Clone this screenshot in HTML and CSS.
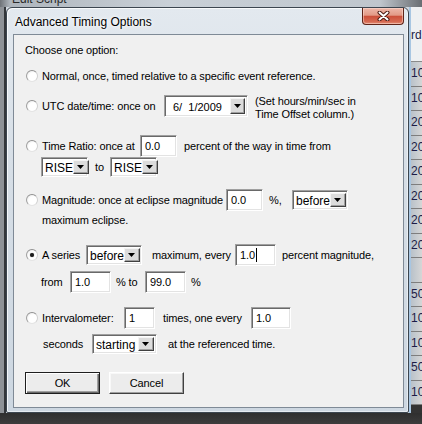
FILE: index.html
```html
<!DOCTYPE html>
<html>
<head>
<meta charset="utf-8">
<link rel="stylesheet" href="styles.css">
</head>
<body>
<div class="desktop">
  <div class="parent">
    <div class="parent-title"><span>Edit Script</span></div>
    <div class="parent-body">
      <div class="pleft"></div>
      <div class="pmid"></div>
      <div class="plist">
        <div class="phead">rd</div>
        <div class="prow">10</div>
        <div class="prow">10</div>
        <div class="prow">20</div>
        <div class="prow">20</div>
        <div class="prow">20</div>
        <div class="prow">20</div>
        <div class="prow">20</div>
        <div class="prow">20</div>
        <div class="prow"></div>
        <div class="prow">50</div>
        <div class="prow">10</div>
        <div class="prow">10</div>
        <div class="prow">50</div>
        <div class="prow">10</div>
      </div>
    </div>
    <div class="parent-bottom"></div>
  </div>

  <div class="dialog">
    <div class="titlebar">
      <span class="title">Advanced Timing Options</span>
      <div class="close">
        <svg width="13" height="10" viewBox="0 0 13 10"><path d="M2.5 1.5L10.5 8.5M10.5 1.5L2.5 8.5" stroke="#4a1a12" stroke-width="4" stroke-linecap="round"/><path d="M2.5 1.5L10.5 8.5M10.5 1.5L2.5 8.5" stroke="#ffffff" stroke-width="2" stroke-linecap="round"/></svg>
      </div>
    </div>
    <div class="client">
      <div class="line head">Choose one option:</div>

      <div class="line l1"><span class="radio"></span><span>Normal, once, timed relative to a specific event reference.</span></div>

      <div class="line l2">
        <span class="radio"></span><span class="lbl w-utc">UTC date/time: once on</span>
        <div class="select date"><span class="val date-val">6/&nbsp; 1/2009</span><span class="btn"><svg width="7" height="4" viewBox="0 0 7 4"><path d="M0 0H7L3.5 4Z" fill="#000"/></svg></span></div>
        <div class="note">(Set hours/min/sec in<br>Time Offset column.)</div>
      </div>

      <div class="line l3">
        <span class="radio"></span><span class="lbl w-ratio">Time Ratio: once at</span>
        <div class="field w37">0.0</div>
        <span class="ml7">percent of the way in time from</span>
      </div>

      <div class="line l3b">
        <div class="select w47 ml16"><span class="val">RISE</span><span class="btn"><svg width="7" height="4" viewBox="0 0 7 4"><path d="M0 0H7L3.5 4Z" fill="#000"/></svg></span></div>
        <span class="lbl ml7 w-to">to</span>
        <div class="select w47"><span class="val">RISE</span><span class="btn"><svg width="7" height="4" viewBox="0 0 7 4"><path d="M0 0H7L3.5 4Z" fill="#000"/></svg></span></div>
      </div>

      <div class="line l4">
        <span class="radio"></span><span class="lbl w-mag">Magnitude: once at eclipse magnitude</span>
        <div class="field w37">0.0</div>
        <span class="lbl ml6 w-pc">%,</span>
        <div class="select w56"><span class="val">before</span><span class="btn"><svg width="7" height="4" viewBox="0 0 7 4"><path d="M0 0H7L3.5 4Z" fill="#000"/></svg></span></div>
      </div>

      <div class="line l4b"><span class="ml17">maximum eclipse.</span></div>

      <div class="line l5">
        <span class="radio checked"></span><span class="lbl w-series">A series</span>
        <div class="select w56"><span class="val">before</span><span class="btn"><svg width="7" height="4" viewBox="0 0 7 4"><path d="M0 0H7L3.5 4Z" fill="#000"/></svg></span></div>
        <span class="lbl ml10 w-every">maximum, every</span>
        <div class="field w41">1.0<span class="caret"></span></div>
        <span class="ml6">percent magnitude,</span>
      </div>

      <div class="line l5b">
        <span class="lbl ml16 w-from">from</span>
        <div class="field w41">1.0</div>
        <span class="lbl ml5 w-pcto">% to</span>
        <div class="field w41">99.0</div>
        <span class="ml5">%</span>
      </div>

      <div class="line l6">
        <span class="radio"></span><span class="lbl w-intv">Intervalometer:</span>
        <div class="field w31">1</div>
        <span class="lbl ml8 w-times">times, one every</span>
        <div class="field w40">1.0</div>
      </div>

      <div class="line l6b">
        <span class="lbl ml18 w-sec">seconds</span>
        <div class="select w65"><span class="val">starting</span><span class="btn"><svg width="7" height="4" viewBox="0 0 7 4"><path d="M0 0H7L3.5 4Z" fill="#000"/></svg></span></div>
        <span class="ml11">at the referenced time.</span>
      </div>

      <div class="line buttons">
        <div class="button default">OK</div>
        <div class="button cancel">Cancel</div>
      </div>
    </div>
  </div>
</div>
</body>
</html>
```

FILE: styles.css
```css
* { box-sizing: border-box; }
html, body { margin: 0; padding: 0; }
body {
  width: 422px;
  height: 424px;
  overflow: hidden;
  font-family: "Liberation Sans", Arial, sans-serif;
  font-size: 11px;
  letter-spacing: -0.12px;
  color: #000;
  background: #333;
}
.desktop { position: relative; width: 422px; height: 424px; overflow: hidden; }

/* background parent window */
.parent { position: absolute; inset: 0; display: flex; flex-direction: column; }
.parent-title {
  height: 7px;
  position: relative;
  overflow: hidden;
  background: linear-gradient(90deg, #6f7378 0, #aeb5bc 10px, #c9d0d7 40%, #bfc6cd 90%, #6a6e73 100%);
}
.parent-title span {
  position: absolute;
  left: 12px;
  top: -8px;
  font-size: 12px;
  letter-spacing: 0;
  color: #2a2a2a;
}
.parent-body { flex: 1; display: flex; }
.pleft { width: 6px; background: linear-gradient(90deg, #8e9297 0 4px, #33363a 4px 6px); }
.pmid { flex: 1; background: #cfd6dd; }
.plist {
  width: 13px;
  display: flex;
  flex-direction: column;
  border-left: 2px solid #a8c6e2;
  overflow: hidden;
  color: #1c1c48;
  font-size: 12px;
  letter-spacing: 0;
}
.phead {
  height: 55px;
  flex: none;
  padding-top: 21px;
  line-height: 14px;
  background: #eef0f2;
  border-bottom: 1px solid #8a8a8a;
}
.prow {
  height: 24.5px;
  flex: none;
  line-height: 23px;
  background: linear-gradient(90deg, #b9c2ca, #d6d6d6);
  border-bottom: 1px solid #7e7e7e;
}
.parent-bottom {
  height: 11px;
  background: linear-gradient(#2f2f2f, #3c3c3c);
}

/* dialog window */
.dialog {
  position: absolute;
  left: 6px;
  top: 7px;
  width: 403px;
  height: 406px;
  border: 1px solid #3c4650;
  border-radius: 6px 6px 2px 2px;
  background: linear-gradient(180deg, #e3e9ef 0%, #d6dee6 40%, #cdd7e1 100%);
  box-shadow: inset 1px 1px 0 rgba(255,255,255,0.75), inset -1px -1px 0 rgba(255,255,255,0.5);
  padding: 0 4px 4px 6px;
  display: flex;
  flex-direction: column;
}
.titlebar {
  height: 26px;
  flex: none;
  display: flex;
  align-items: flex-start;
}
.title {
  padding: 7px 0 0 2px;
  line-height: 14px;
  font-size: 12px;
  letter-spacing: 0;
  color: #000;
  text-shadow: 0 0 6px #fff, 0 0 3px #fff;
}
.close {
  margin-left: auto;
  width: 42px;
  height: 17px;
  border: 1px solid #5e2418;
  border-top: none;
  border-radius: 0 0 4px 4px;
  background: linear-gradient(180deg, #eeb8aa 0%, #e29a86 45%, #cc503a 52%, #d66a52 85%, #e39078 100%);
  box-shadow: inset 0 0 0 1px rgba(255,225,215,0.5);
  display: flex;
  align-items: center;
  justify-content: center;
}
.close svg { display: block; }

.client {
  flex: 1;
  border: 1px solid #7f8a96;
  background: #f0f0f0;
  padding: 4px 0 0 11px;
  display: flex;
  flex-direction: column;
}

.line {
  display: flex;
  align-items: center;
  height: 22px;
  flex: none;
  white-space: nowrap;
}
.l1 { margin-top: 4px; }
.l2 { margin-top: 8px; }
.l3 { margin-top: 18px; }
.l3b { height: 20px; }
.l4 { margin-top: 12px; }
.l4b { height: 18px; }
.l5 { margin-top: 15px; }
.l5b { margin-top: 5px; }
.l6 { margin-top: 14px; }
.l6b { margin-top: 5px; height: 20px; }
.buttons { margin-top: 18px; }

.lbl { display: inline-block; flex: none; }
.w-utc { width: 122px; }
.w-ratio { width: 98px; }
.w-to { width: 15px; }
.w-mag { width: 184px; }
.w-pc { width: 23px; }
.w-series { width: 44px; }
.w-every { width: 83px; }
.w-from { width: 29px; }
.w-pcto { width: 29px; }
.w-intv { width: 82px; }
.w-times { width: 88px; }
.w-sec { width: 49px; }

.ml5 { margin-left: 5px; }
.ml6 { margin-left: 6px; }
.ml7 { margin-left: 7px; }
.ml8 { margin-left: 8px; }
.ml10 { margin-left: 10px; }
.ml11 { margin-left: 11px; }
.ml16 { margin-left: 16px; }
.ml17 { margin-left: 17px; }
.ml18 { margin-left: 18px; }

/* radio buttons */
.radio {
  flex: none;
  width: 12px;
  height: 12px;
  margin: 0 4px 0 1px;
  border-radius: 50%;
  border: 1px solid;
  border-color: #909090 #d0d0d0 #e4e4e4 #a0a0a0;
  background: radial-gradient(circle at 62% 62%, #ffffff 0 50%, #ececec 80%, #dadada 100%);
  position: relative;
}
.radio.checked::after {
  content: "";
  position: absolute;
  left: 3px;
  top: 3px;
  width: 4px;
  height: 4px;
  border-radius: 50%;
  background: #1b1b1b;
  box-shadow: 0 0 1px #555;
}

/* text fields */
.field {
  flex: none;
  height: 22px;
  background: #fff;
  border: 1px solid;
  border-color: #a0a0a0 #ffffff #ffffff #a0a0a0;
  box-shadow: inset 1px 1px 0 #696969, inset -1px -1px 0 #e3e3e3;
  padding-left: 4px;
  line-height: 20px;
  display: flex;
  align-items: center;
}
.w31 { width: 31px; }
.w37 { width: 37px; }
.w40 { width: 40px; }
.w41 { width: 41px; }
.w47 { width: 47px; }
.w56 { width: 56px; }
.w65 { width: 65px; }
.caret {
  display: inline-block;
  width: 1px;
  height: 14px;
  background: #000;
  margin-left: 1px;
}

/* combo boxes */
.select {
  flex: none;
  height: 20px;
  display: flex;
  background: #fff;
  border: 1px solid;
  border-color: #a0a0a0 #ffffff #ffffff #a0a0a0;
  box-shadow: inset 1px 1px 0 #696969, inset -1px -1px 0 #e3e3e3;
  padding: 2px;
}
.select .val {
  flex: 1;
  padding-left: 1px;
  line-height: 16px;
  font-size: 12px;
  letter-spacing: 0;
}
.select .btn {
  flex: none;
  width: 16px;
  background: #dcdcdc;
  border: 1px solid;
  border-color: #f4f4f4 #404040 #404040 #f4f4f4;
  box-shadow: inset -1px -1px 0 #a0a0a0;
  display: flex;
  align-items: center;
  justify-content: center;
}
.select .btn svg { display: block; margin-left: -1px; }
.date { width: 84px; height: 22px; }
.date-val { padding-left: 6px !important; font-size: 11px !important; line-height: 18px !important; }
.date .btn { width: 15px; }

.note {
  align-self: flex-start;
  margin-left: 7px;
  line-height: 13px;
  margin-top: 0;
}

/* push buttons */
.button {
  width: 75px;
  height: 22px;
  display: flex;
  align-items: center;
  justify-content: center;
  background: #ececec;
  flex: none;
}
.default {
  border: 1px solid #1e1e1e;
  box-shadow: inset 1px 1px 0 #ffffff, inset -1px -1px 0 #696969, inset -2px -2px 0 #a0a0a0;
}
.cancel {
  margin-left: 9px;
  border: 1px solid;
  border-color: #ffffff #404040 #404040 #ffffff;
  box-shadow: inset -1px -1px 0 #a0a0a0, inset 1px 1px 0 #f8f8f8;
}
```
